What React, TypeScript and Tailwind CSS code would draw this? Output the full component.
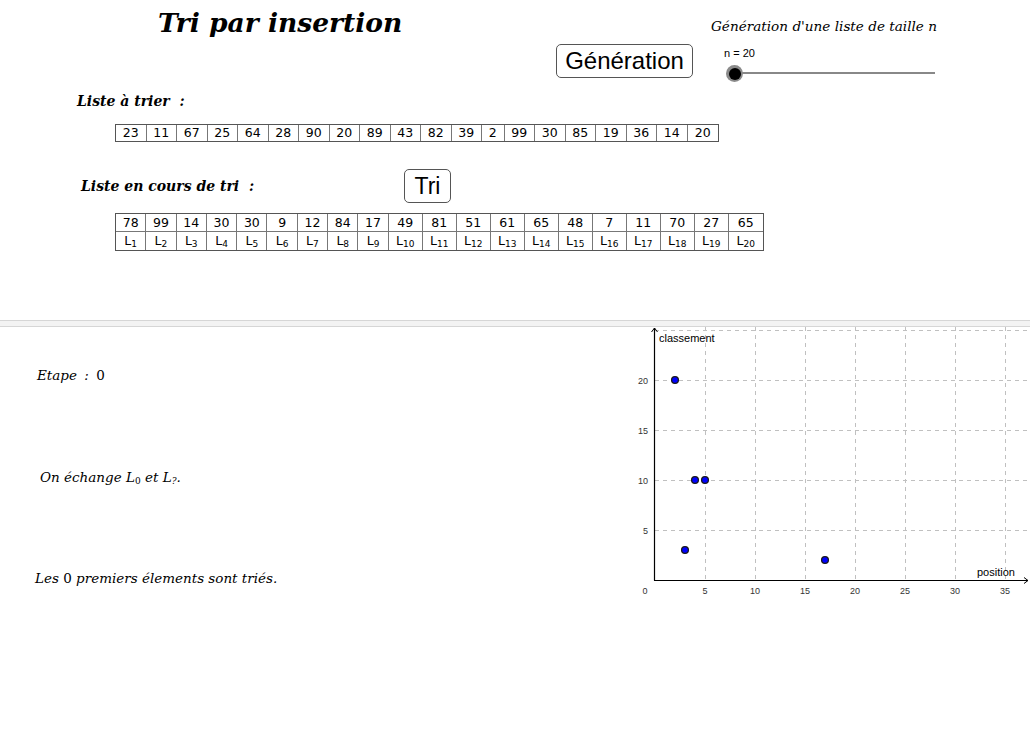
import React from "react";

const serif = { fontFamily: '"DejaVu Serif", "Liberation Serif", serif' };

const list1 = [23, 11, 67, 25, 64, 28, 90, 20, 89, 43, 82, 39, 2, 99, 30, 85, 19, 36, 14, 20];
const list2 = [78, 99, 14, 30, 30, 9, 12, 84, 17, 49, 81, 51, 61, 65, 48, 7, 11, 70, 27, 65];

function Graph() {
  const ox = 35;
  const oy = 253;
  const vx = [85, 135, 185, 235, 285, 335, 385];
  const hy = [3, 53, 103, 153, 203];
  const pts: [number, number][] = [
    [2, 20],
    [4, 10],
    [5, 10],
    [3, 3],
    [17, 2],
  ];
  return (
    <svg width="410" height="273" viewBox="0 0 410 273" className="block">
      {vx.map((x) => (
        <line key={"v" + x} x1={x + 0.5} y1={0} x2={x + 0.5} y2={oy} stroke="#c0c0c0" strokeDasharray="4 4" />
      ))}
      {hy.map((y) => (
        <line key={"h" + y} x1={ox} y1={y + 0.5} x2={410} y2={y + 0.5} stroke="#c0c0c0" strokeDasharray="4 4" />
      ))}
      <line x1={34.5} y1={1} x2={34.5} y2={253.5} stroke="#000" strokeWidth="1.2" />
      <line x1={34} y1={253.5} x2={408} y2={253.5} stroke="#000" strokeWidth="1.2" />
      <path d="M31.5 5 L34.5 1 L37.5 5" fill="none" stroke="#000" strokeWidth="1" />
      <path d="M404 250.5 L408 253.5 L404 256.5" fill="none" stroke="#000" strokeWidth="1" />
      <g fontFamily="Liberation Sans, Arial, sans-serif" fontSize="9" fill="#333">
        <text x={25} y={266.5} textAnchor="middle">0</text>
        {[5, 10, 15, 20, 25, 30, 35].map((n) => (
          <text key={"xl" + n} x={ox + n * 10} y={266.5} textAnchor="middle">{n}</text>
        ))}
        {[20, 15, 10, 5].map((n) => (
          <text key={"yl" + n} x={28} y={oy - n * 10 + 3.5} textAnchor="end">{n}</text>
        ))}
      </g>
      <g fontFamily="Liberation Sans, Arial, sans-serif" fontSize="11" fill="#000">
        <text x={39} y={15}>classement</text>
        <text x={357} y={249}>position</text>
      </g>
      {pts.map(([x, y], i) => (
        <circle key={i} cx={ox + x * 10} cy={oy - y * 10} r={3.4} fill="#0000ff" stroke="#1a1a1a" strokeWidth="1.3" />
      ))}
    </svg>
  );
}

export default function App() {
  return (
    <div className="w-[1030px] h-[729px] bg-white overflow-hidden text-black">
      {/* top panel */}
      <div className="h-[320px]">
        {/* row 1 */}
        <div className="flex h-[44px]">
          <div className="w-[711px] pl-[158px] pt-[8px]">
            <div className="text-[26.5px] leading-[30px] font-bold italic" style={serif}>
              Tri par insertion
            </div>
          </div>
          <div className="pt-[17px] text-[13.6px] leading-[18px] italic" style={serif}>
            Génération d'une liste de taille n
          </div>
        </div>
        {/* row 2 */}
        <div className="flex h-[34px]">
          <div className="w-[556px]" />
          <div
            className="w-[137px] h-[34px] border border-[#555] rounded-[5px] flex items-center justify-center text-[24px] leading-none"
            style={{ fontFamily: '"Liberation Sans", Arial, sans-serif' }}
          >
            Génération
          </div>
          <div className="w-[31px]" />
          <div className="relative w-[215px] h-[34px]">
            <div
              className="absolute left-0 top-[3px] text-[11px] leading-[12px]"
              style={{ fontFamily: '"Liberation Sans", Arial, sans-serif' }}
            >
              n = 20
            </div>
            <div className="absolute left-[11px] top-[28px] w-[200px] h-[1.5px] bg-[#888]" />
            <div className="absolute left-[2px] top-[21px] w-[17px] h-[17px] rounded-full bg-[#8a8a8a] flex items-center justify-center">
              <div className="w-[12px] h-[12px] rounded-full bg-black" />
            </div>
          </div>
        </div>
        {/* liste a trier */}
        <div className="pl-[77px] mt-[13px] h-[20px] leading-[20px] text-[14px] font-bold italic" style={serif}>
          Liste à trier &nbsp;:
        </div>
        <div className="pl-[115px] mt-[13px]">
          <div
            className="flex w-fit border border-[#555] text-[12.5px] leading-[16px]"
            style={{ fontFamily: '"DejaVu Sans", sans-serif' }}
          >
            {list1.map((v, i) => (
              <div
                key={i}
                className={
                  (v < 10 ? "w-[22.5px] " : "w-[30.5px] ") +
                  "text-center border-r border-[#777] last:border-r-0"
                }
              >
                {v}
              </div>
            ))}
          </div>
        </div>
        {/* liste en cours */}
        <div className="flex items-center mt-[27px] h-[34px]">
          <div className="w-[404px] pl-[81px] text-[14px] font-bold italic" style={serif}>
            Liste en cours de tri &nbsp;:
          </div>
          <div
            className="w-[47px] h-[34px] border border-[#555] rounded-[5px] flex items-center justify-center text-[23px] leading-none"
            style={{ fontFamily: '"Liberation Sans", Arial, sans-serif' }}
          >
            Tri
          </div>
        </div>
        <div className="pl-[115px] mt-[10px]">
          <div
            className="flex w-fit border border-[#555] text-[12.5px]"
            style={{ fontFamily: '"DejaVu Sans", sans-serif' }}
          >
            {list2.map((v, i) => (
              <div
                key={i}
                className={
                  (i < 9 ? "w-[30.3px] " : "w-[34px] ") +
                  "flex flex-col text-center border-r border-[#777] last:border-r-0"
                }
              >
                <div className="h-[18px] leading-[18px] border-b border-[#777]">{v}</div>
                <div className="h-[18px] leading-[18px]">
                  L<sub className="text-[9px] align-baseline relative top-[2px]">{i + 1}</sub>
                </div>
              </div>
            ))}
          </div>
        </div>
      </div>
      {/* divider */}
      <div className="h-[7px] border-t border-b border-[#d6d6d6] bg-[#f3f3f3]" />
      {/* bottom panel */}
      <div className="flex">
        <div className="w-[620px] italic text-[13.5px]" style={serif}>
          <div className="pl-[37px] mt-[38px] h-[20px] leading-[20px]">
            Etape <span className="mx-[3px]">:</span> <span className="not-italic">0</span>
          </div>
          <div className="pl-[40px] mt-[82px] h-[20px] leading-[20px]">
            On échange L<sub className="not-italic text-[9px]">0</sub> et L<sub className="text-[9px]">?</sub>.
          </div>
          <div className="pl-[35px] mt-[81px] h-[20px] leading-[20px]">
            Les <span className="not-italic">0</span> premiers élements sont triés.
          </div>
        </div>
        <Graph />
      </div>
    </div>
  );
}
